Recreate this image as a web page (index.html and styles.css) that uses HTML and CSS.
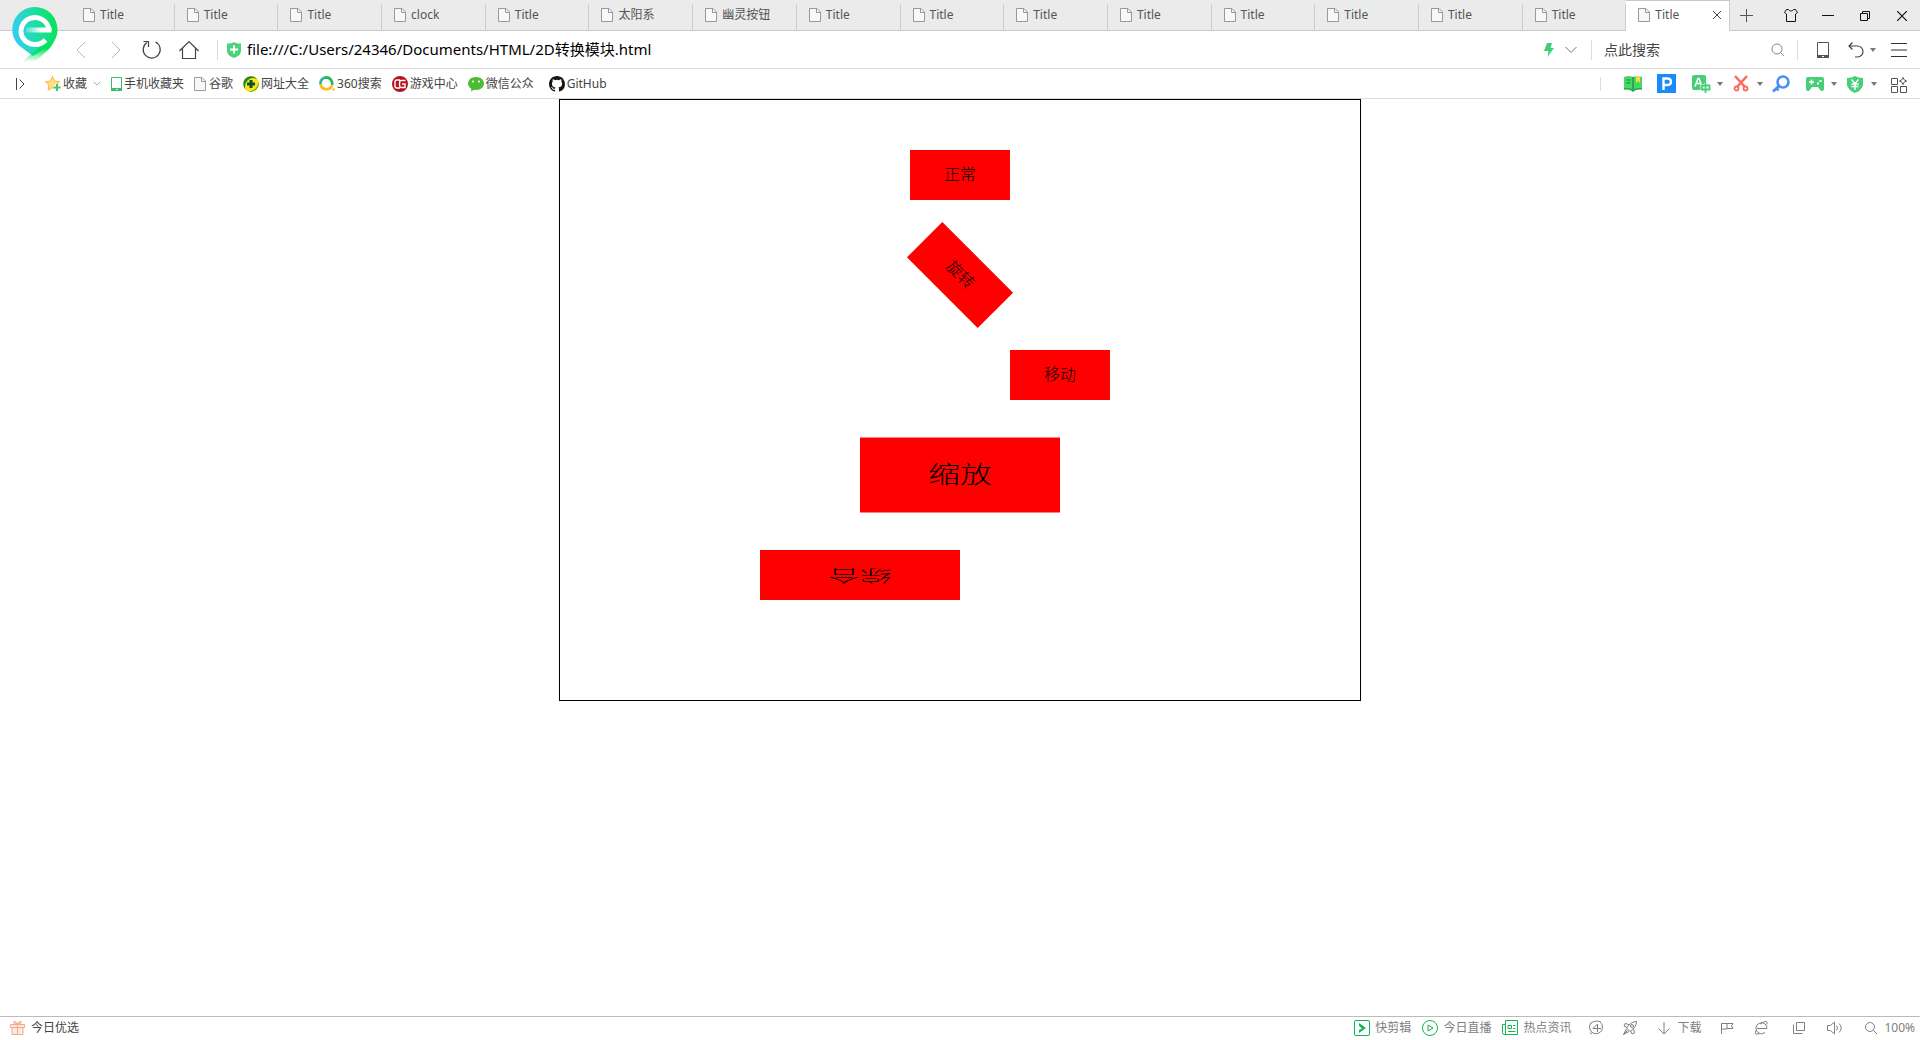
FILE: index.html
```html
<!DOCTYPE html>
<html lang="zh-CN">
<head>
<meta charset="utf-8">
<title>Title</title>
<link rel="stylesheet" href="styles.css">
</head>
<body>
<svg class="defs" aria-hidden="true">
  <symbol id="doc" viewBox="0 0 12 14"><path d="M.5.5H8L11.5 4v9.500H.5z" fill="#f8f8f8" stroke="#999"/><path d="M7.500.5v4h4" fill="none" stroke="#999"/></symbol>
  <symbol id="caret" viewBox="0 0 6 4"><path d="M0 0h6L3 4z" fill="#777"/></symbol>
  <symbol id="chevron" viewBox="0 0 12 8"><path d="M.5 1L6 6.500 11.500 1" fill="none" stroke="#777"/></symbol>
  <symbol id="magnifier" viewBox="0 0 14 14"><circle cx="6" cy="6" r="5" fill="none" stroke="currentColor"/><path d="M9.500 9.500L13 13" stroke="currentColor"/></symbol>
</svg>

<header class="chrome">
  <svg class="logo" viewBox="0 0 48 58" aria-label="360">
    <defs>
      <linearGradient id="lg" x1="0" y1="0.700" x2="1" y2="0.500"><stop offset="0" stop-color="#33cdf5"/><stop offset=".5" stop-color="#20dcb0"/><stop offset="1" stop-color="#08e45c"/></linearGradient>
      <linearGradient id="tail" x1="0" y1="0" x2="0" y2="1"><stop offset="0" stop-color="#06e35c"/><stop offset=".4" stop-color="#06e35c"/><stop offset="1" stop-color="#06e35c" stop-opacity="0"/></linearGradient>
      <linearGradient id="bar" x1="0" y1="0" x2="1" y2="0"><stop offset="0" stop-color="#fff" stop-opacity=".2"/><stop offset=".6" stop-color="#fff"/></linearGradient>
    </defs>
    <path d="M24 1a22.500 22.500 0 0 1 22.500 22.500c0 7-3 12-7 16L22 50 8 39.500A22.500 22.500 0 0 1 24 1z" fill="url(#lg)"/>
    <path d="M13 54L27 42.500 44 33c-2 5-4 8-7 11L24 56H12z" fill="url(#tail)"/>
    <path d="M38 24.500A14 13.500 0 1 0 34.500 34" fill="none" stroke="#fff" stroke-width="5"/>
    <path d="M15 21.500h25.500v5H15z" fill="url(#bar)"/>
  </svg>

  <div class="titlebar">
    <div class="tabs" role="tablist">
      <button class="tab" role="tab"><svg class="doc"><use href="#doc"/></svg>Title</button>
      <button class="tab" role="tab"><svg class="doc"><use href="#doc"/></svg>Title</button>
      <button class="tab" role="tab"><svg class="doc"><use href="#doc"/></svg>Title</button>
      <button class="tab" role="tab"><svg class="doc"><use href="#doc"/></svg>clock</button>
      <button class="tab" role="tab"><svg class="doc"><use href="#doc"/></svg>Title</button>
      <button class="tab" role="tab"><svg class="doc"><use href="#doc"/></svg>太阳系</button>
      <button class="tab" role="tab"><svg class="doc"><use href="#doc"/></svg>幽灵按钮</button>
      <button class="tab" role="tab"><svg class="doc"><use href="#doc"/></svg>Title</button>
      <button class="tab" role="tab"><svg class="doc"><use href="#doc"/></svg>Title</button>
      <button class="tab" role="tab"><svg class="doc"><use href="#doc"/></svg>Title</button>
      <button class="tab" role="tab"><svg class="doc"><use href="#doc"/></svg>Title</button>
      <button class="tab" role="tab"><svg class="doc"><use href="#doc"/></svg>Title</button>
      <button class="tab" role="tab"><svg class="doc"><use href="#doc"/></svg>Title</button>
      <button class="tab" role="tab"><svg class="doc"><use href="#doc"/></svg>Title</button>
      <button class="tab" role="tab"><svg class="doc"><use href="#doc"/></svg>Title</button>
      <button class="tab active" role="tab" aria-selected="true"><svg class="doc"><use href="#doc"/></svg>Title<svg class="tab-close" viewBox="0 0 8 8"><path d="M0 0l8 8M8 0L0 8" stroke="#444"/></svg></button>
    </div>
    <button class="new-tab" aria-label="新标签页"><svg width="13" height="13" viewBox="0 0 13 13"><path d="M6.500 0v13M0 6.500h13" stroke="#555"/></svg></button>
    <div class="window-buttons">
      <button aria-label="皮肤"><svg width="14" height="13" viewBox="0 0 14 13"><path d="M4.500.5C5.500 2.500 8.500 2.500 9.500.5h2l2 3-2 1.500v7.500h-9V5L.5 3.500l2-3z" fill="none" stroke="#111"/></svg></button>
      <button aria-label="最小化"><svg width="12" height="13" viewBox="0 0 12 13"><path d="M0 6.500h12" stroke="#111"/></svg></button>
      <button aria-label="还原"><svg width="10" height="10" viewBox="0 0 10 10"><path d="M.5 2.500h7v7h-7zM2.500 2.500v-2h7v7h-2" fill="none" stroke="#111"/></svg></button>
      <button aria-label="关闭"><svg width="10" height="10" viewBox="0 0 10 10"><path d="M0 0l10 10M10 0L0 10" stroke="#111" stroke-width="1.200"/></svg></button>
    </div>
  </div>

  <div class="address">
    <div class="nav-buttons">
      <button aria-label="后退"><svg width="18" height="18" viewBox="0 0 18 18"><path d="M13 1L5 9l8 8" fill="none" stroke="#b8b8b8"/></svg></button>
      <button aria-label="前进"><svg width="18" height="18" viewBox="0 0 18 18"><path d="M5 1l8 8-8 8" fill="none" stroke="#b8b8b8"/></svg></button>
      <button aria-label="刷新"><svg width="20" height="20" viewBox="0 0 20 20"><path d="M13.500 2A8.500 8.500 0 1 1 5 2.500M1.500 1.500H6.500V7" fill="none" stroke="#444" stroke-width="1.200"/></svg></button>
      <button aria-label="主页"><svg width="20" height="20" viewBox="0 0 20 20"><path d="M.5 11L10 1.500 19.500 11M3.500 8.500v10h13v-10" fill="none" stroke="#444" stroke-width="1.200"/></svg></button>
    </div>
    <span class="rule"></span>
    <svg class="safe" viewBox="0 0 14 16"><path d="M0 1.500Q5 1.500 7 0q2 1.500 7 1.500v8Q13 14 7 16 1 14 0 9.500z" fill="#4bd37b"/><path d="M7 3.500v8M3 7.500h8" stroke="#fff" stroke-width="2"/></svg>
    <input class="url" aria-label="地址" value="file:///C:/Users/24346/Documents/HTML/2D转换模块.html">
    <div class="url-tools">
      <svg width="10" height="14" viewBox="0 0 10 14"><path d="M3 0h5L6.500 5H10L3.500 14 4.500 8H0z" fill="#3fd077"/></svg>
      <svg width="12" height="8"><use href="#chevron"/></svg>
    </div>
    <span class="rule"></span>
    <label class="search"><input aria-label="搜索" value="点此搜索"><svg width="14" height="14"><use href="#magnifier"/></svg></label>
    <span class="rule"></span>
    <div class="menu-buttons">
      <button aria-label="手机"><svg width="12" height="16" viewBox="0 0 12 16"><path d="M.5.5h11v15H.5z" fill="none" stroke="#555"/><path d="M0 13h12v3H0z" fill="#555"/><path d="M5 14.500h2" stroke="#fff"/></svg></button>
      <button class="with-caret" aria-label="恢复"><svg width="16" height="16" viewBox="0 0 16 16"><path d="M4.500.5L1 4l3.500 3.500M1 4h8.500a5.500 5.500 0 0 1 0 11H7" fill="none" stroke="#444" stroke-width="1.200"/></svg><svg width="6" height="4"><use href="#caret"/></svg></button>
      <button aria-label="菜单"><svg width="16" height="14" viewBox="0 0 16 14"><path d="M0 .5h16M0 7h16M0 13.500h16" stroke="#333"/></svg></button>
    </div>
  </div>

  <div class="bookmarks">
    <button class="expand" aria-label="展开"><svg width="9" height="12" viewBox="0 0 9 12"><path d="M.5 0v12M3.500 1.500L8 6l-4.500 4.500" fill="none" stroke="#444"/></svg></button>
    <nav class="links">
      <a href="#"><svg width="16" height="16" viewBox="0 0 16 16"><path d="M7.500.5l2.200 4.600 4.900.6-3.600 3.500.9 5-4.400-2.400-4.400 2.400.9-5L.4 5.700l4.900-.6z" fill="#ffe184" stroke="#f5b93a"/><path d="M12 8v7M8.500 11.500h7" stroke="#fff" stroke-width="4"/><path d="M12 8v7M8.500 11.500h7" stroke="#45c46c" stroke-width="2"/></svg>收藏<svg class="fold" width="8" height="5"><use href="#chevron"/></svg></a>
      <a href="#"><svg width="11" height="14" viewBox="0 0 11 14"><path d="M.5.5h10v13H.5z" fill="#fff" stroke="#3bbd68"/><path d="M0 11h11v3H0z" fill="#3bbd68"/><path d="M5 12.500h1.500" stroke="#fff"/></svg>手机收藏夹</a>
      <a class="page" href="#"><svg class="doc"><use href="#doc"/></svg>谷歌</a>
      <a href="#"><svg width="16" height="16" viewBox="0 0 16 16"><circle cx="8" cy="8" r="8" fill="#ffe11b"/><path d="M2 3a8 8 0 0 1 12 0Q8 0 4 5 1 9 2.500 13.500A8 8 0 0 1 2 3z" fill="#168a2e"/><path d="M15.500 6a8 8 0 0 1-10 9.500Q14 15 15.500 6z" fill="#55ae22"/><path d="M8 4v8M4 8h8" stroke="#07551c" stroke-width="3"/></svg>网址大全</a>
      <a href="#"><svg width="16" height="16" viewBox="0 0 16 16"><path d="M1.500 8a6 6 0 0 1 10.500-4.500" fill="none" stroke="#29b6a0" stroke-width="2.600"/><path d="M6 1.700A6 6 0 0 1 13 9" fill="none" stroke="#27b84b" stroke-width="2.600"/><path d="M1.500 8a6 6 0 0 0 11.500 1.500" fill="none" stroke="#fbba17" stroke-width="2.600"/><circle cx="14.500" cy="13.500" r="1.200" fill="#fbba17"/></svg>360搜索</a>
      <a href="#"><svg width="16" height="16" viewBox="0 0 16 16"><circle cx="8" cy="8" r="8" fill="#b5131d"/><path d="M8 4H5Q3 4 3 6v4q0 2 2 2h3M13.500 4.500H9Q7.500 4.500 7.500 8T9 11.500h4V8h-3" fill="none" stroke="#fff" stroke-width="1.400"/></svg>游戏中心</a>
      <a href="#"><svg width="16" height="16" viewBox="0 0 16 16"><path d="M8 1c4.500 0 8 2.800 8 6.500S12.500 14 8 14l-2-.2L3 15.500l.3-2.700C1.300 11.600 0 9.700 0 7.500 0 3.800 3.500 1 8 1z" fill="#4bbd32"/><circle cx="5" cy="5.500" r="1.100" fill="#fff"/><circle cx="11" cy="5.500" r="1.100" fill="#fff"/></svg>微信公众</a>
      <a class="spaced" href="#"><svg width="16" height="16" viewBox="0 0 16 16"><path fill="#161514" d="M8 0C3.580 0 0 3.580 0 8c0 3.540 2.290 6.530 5.470 7.590.4.070.55-.17.55-.38 0-.19-.01-.82-.01-1.490-2.010.37-2.530-.49-2.690-.94-.09-.23-.48-.94-.82-1.130-.28-.15-.68-.52-.01-.53.63-.01 1.080.58 1.230.82.72 1.210 1.870.87 2.330.66.070-.52.28-.87.51-1.070-1.780-.2-3.640-.89-3.640-3.950 0-.87.31-1.590.82-2.150-.08-.2-.36-1.020.08-2.120 0 0 .67-.21 2.200.82a7.600 7.600 0 0 1 4 0c1.530-1.040 2.200-.82 2.200-.82.44 1.100.16 1.920.08 2.120.51.56.82 1.270.82 2.150 0 3.070-1.870 3.750-3.650 3.950.29.25.54.73.54 1.480 0 1.070-.01 1.930-.01 2.200 0 .21.15.46.55.38A8 8 0 0 0 16 8c0-4.420-3.580-8-8-8z"/></svg>GitHub</a>
    </nav>
    <div class="extensions">
      <span class="rule"></span>
      <button aria-label="阅读"><svg width="20" height="18" viewBox="0 0 20 18"><path d="M1 2q5-2 9 0 4-2 9 0v12q-6-1-9 2-3-3-9-2z" fill="#45d866"/><path d="M10 2v13M3.500 5h4M3.500 8h4" stroke="#118b38" stroke-width="1.200"/><path d="M1 14q6-1 9 2 3-3 9-2" fill="none" stroke="#22a747" stroke-width="1.500"/><path d="M13 1h4v7l-2-2-2 2z" fill="#ffd24a"/></svg></button>
      <button aria-label="P"><svg width="20" height="20" viewBox="0 0 20 20"><path d="M0 0h19v19H0z" fill="#1b8cf7"/><path d="M6.500 16V4.500h3.500q4 0 4 3.200T10 11H6.500" fill="none" stroke="#fff" stroke-width="2.400"/></svg></button>
      <button class="with-caret" aria-label="翻译"><svg width="20" height="20" viewBox="0 0 20 20"><rect x="1" y="1" width="14" height="15" rx="2" fill="#46cf76"/><path d="M4 12.500L7 4.500h1l3 8M5 9.500h5" fill="none" stroke="#fff" stroke-width="1.500"/><path d="M14.500 9v10M11 11.500h7.500v4H11z" fill="none" stroke="#fff" stroke-width="3"/><path d="M14.500 9v10M11 11.500h7.500v4H11z" fill="#fff" stroke="#46cf76" stroke-width="1.800"/></svg><svg width="6" height="4"><use href="#caret"/></svg></button>
      <button class="with-caret" aria-label="截图"><svg width="20" height="20" viewBox="0 0 20 20"><path d="M4 2l10 11M16 2L6 13" stroke="#fb6b60" stroke-width="2.600"/><circle cx="5.500" cy="14.500" r="2" fill="none" stroke="#fb6b60" stroke-width="1.800"/><circle cx="14.500" cy="14.500" r="2" fill="none" stroke="#fb6b60" stroke-width="1.800"/></svg><svg width="6" height="4"><use href="#caret"/></svg></button>
      <button aria-label="密码"><svg width="20" height="20" viewBox="0 0 20 20"><circle cx="12" cy="8" r="5.500" fill="none" stroke="#4c8df8" stroke-width="2.600"/><path d="M8 12l-6 5.500M5.500 14l2 2.500" stroke="#4c8df8" stroke-width="2.800"/></svg></button>
      <button class="with-caret" aria-label="游戏"><svg width="20" height="20" viewBox="0 0 20 20"><path d="M3 3h14q2 0 2 2v10q0 2-2 2h-1l-3-4H7l-3 4H3q-2 0-2-2V5q0-2 2-2z" fill="#46cf76"/><path d="M6.500 5.500v5M4 8h5" stroke="#fff" stroke-width="1.500"/><path d="M12 9.500h2M14.500 7h2" stroke="#fff" stroke-width="2"/></svg><svg width="6" height="4"><use href="#caret"/></svg></button>
      <button class="with-caret" aria-label="购物"><svg width="20" height="20" viewBox="0 0 20 20"><path d="M2 4q5 0 8-2 3 2 8 2v7q-1 5-8 8-7-3-8-8z" fill="#46cf76"/><path d="M6.500 5.500L10 9.500l3.500-4M10 9v7M6.500 10h7M6.500 12.500h7" fill="none" stroke="#fff" stroke-width="1.400"/></svg><svg width="6" height="4"><use href="#caret"/></svg></button>
      <button aria-label="扩展"><svg width="20" height="20" viewBox="0 0 20 20"><path d="M2.500 4.500h6v6h-6zM2.500 12.500h6v6h-6zM11.500 12.500h6v6h-6zM14 3.500l1.200 2.300 2.300 1.200-2.300 1.200L14 10.500l-1.200-2.300L10.500 7l2.300-1.200z" fill="none" stroke="#555"/></svg></button>
    </div>
  </div>
</header>

<main>
  <ul class="stage">
    <li>正常</li>
    <li class="rotated">旋转</li>
    <li class="moved">移动</li>
    <li class="scaled">缩放</li>
    <li class="combined">综合</li>
  </ul>
</main>

<footer class="status">
  <a class="pick" href="#"><svg width="16" height="16" viewBox="0 0 16 16"><path d="M.5 4.500h14v3H.5zM2 7.500h11v7H2zM7.500 4.500v10" fill="#fdeae0" stroke="#f3a988"/><path d="M7.500 4Q3 4 4 1.500 6 1 7.500 4 9 1 11 1.500 12 4 7.500 4z" fill="#fbd0bc" stroke="#f3a988"/></svg>今日优选</a>
  <div class="feeds">
    <a href="#"><svg width="16" height="16" viewBox="0 0 16 16"><rect x=".5" y=".5" width="15" height="15" rx="1.500" fill="none" stroke="#12b552"/><path d="M5 3l7 5-7 5v-3l3-1.500L5 6z" fill="#12b552"/></svg>快剪辑</a>
    <a href="#"><svg width="16" height="16" viewBox="0 0 16 16"><circle cx="8" cy="8" r="7.500" fill="none" stroke="#12b552"/><path d="M6 5l5 3-5 3z" fill="none" stroke="#12b552"/></svg>今日直播</a>
    <a href="#"><svg width="16" height="16" viewBox="0 0 16 16"><path d="M3.500.5h12v14H2.500a2 2 0 0 1-2-2V4.500h3zM3.500 4.500v10M6 5.500h3.500v3H6zM11 5.500h2.500M11 8.500h2.500M6 11.500h7.500" fill="none" stroke="#12b552"/></svg>热点资讯</a>
  </div>
  <div class="tools">
    <button aria-label="加速"><svg width="16" height="16" viewBox="0 0 16 16"><path d="M3 3a6.500 6.500 0 1 0 9.500-.5M2 3.500Q8-.5 13 2M9.500 4L5 8.500h8M9.500 4v8M2 12.500l2 1.500" fill="none" stroke="currentColor"/></svg></button>
    <button aria-label="火箭"><svg width="16" height="16" viewBox="0 0 16 16"><path d="M14.500 1.500Q9 1.500 4.500 8L8 11.500q6.500-4.500 6.500-10zM7 4.500L3 3.500 2 6l3 1.500M11.500 9l1 4-2.500 1-1.500-3M4.500 9l-3 5.500L7 11.500M1.500 14.500l4-4" fill="none" stroke="currentColor"/><circle cx="10" cy="6" r="1.500" fill="none" stroke="currentColor"/></svg></button>
    <button><svg width="16" height="16" viewBox="0 0 16 16"><path d="M8 2v12M2.500 8.500L8 14l5.500-5.500" fill="none" stroke="currentColor"/></svg>下载</button>
    <button aria-label="标记"><svg width="16" height="16" viewBox="0 0 16 16"><path d="M2.500 14V3.500H8v5.500H2.500M8 3.500h6L12.500 6 14 8.500H8" fill="none" stroke="currentColor"/></svg></button>
    <button aria-label="内核"><svg width="16" height="16" viewBox="0 0 16 16"><path d="M4 8.500h10A5.500 5.500 0 1 0 12 12.500M3.500 9.500Q0 16 6.500 13.500M7 4q8-5.500 7 .5" fill="none" stroke="currentColor"/></svg></button>
  </div>
  <div class="view">
    <button aria-label="窗口"><svg width="16" height="16" viewBox="0 0 16 16"><path d="M5.500 2.500h8v8h-8zM2.500 4.500v9h9" fill="none" stroke="currentColor"/></svg></button>
    <button aria-label="声音"><svg width="16" height="16" viewBox="0 0 16 16"><path d="M.5 5.500h3l4-3.500v12l-4-3.500h-3zM9.500 5.500q2 2.500 0 5M12 3.500q4.500 4.500 0 9" fill="none" stroke="currentColor"/></svg></button>
    <button><svg width="16" height="16" viewBox="0 0 16 16"><circle cx="7" cy="7" r="4.500" fill="none" stroke="currentColor"/><path d="M10.500 10.500L14 14" stroke="currentColor"/></svg>100%</button>
  </div>
</footer>
</body>
</html>
```

FILE: styles.css
```css
* { box-sizing: border-box; }

body {
  display: flex;
  flex-direction: column;
  min-height: 100vh;
  margin: 0;
  background: #fff;
  color: #444;
  font: 12px/16px "Noto Sans", "Noto Sans CJK SC", sans-serif;
}

svg { flex: none; display: block; }

.defs { position: absolute; width: 0; height: 0; }

button {
  display: flex;
  align-items: center;
  justify-content: center;
  margin: 0;
  padding: 0;
  border: 0;
  background: none;
  color: inherit;
  font: inherit;
}

input {
  min-width: 0;
  padding: 0;
  border: 0;
  outline: 0;
  background: none;
  font-family: inherit;
}

a { display: flex; align-items: center; color: inherit; text-decoration: none; }

.chrome { position: relative; }

.logo { position: absolute; left: 11px; top: 6px; width: 48px; height: 58px; }

.doc { width: 12px; height: 14px; }

.rule { flex: none; width: 1px; height: 20px; background: #dcdcdc; }

/* Tab strip */
.titlebar {
  display: flex;
  height: 31px;
  padding-left: 71px;
  background: #ebebeb;
  box-shadow: inset 0 -1px #c8c8c8;
}

.tabs { display: flex; flex: 1; align-items: flex-end; min-width: 0; }

.tab {
  flex: 1 1 0;
  justify-content: flex-start;
  gap: 5px;
  min-width: 0;
  height: 27px;
  padding: 0 8px 5px 12px;
  border-right: 1px solid #cdcdcd;
  color: #555;
  white-space: nowrap;
}

.tab.active {
  height: 31px;
  padding-top: 3px;
  border-top: 1px solid #c8c8c8;
  background: #fff;
}

.tab-close { width: 8px; height: 8px; margin-left: auto; }

.new-tab { width: 33px; margin-right: 10px; }

.window-buttons { display: flex; gap: 1px; }
.window-buttons button { width: 36px; }

/* Address bar */
.address {
  display: flex;
  align-items: center;
  height: 38px;
  padding: 0 13px 0 72px;
  border-bottom: 1px solid #dcdcdc;
}

.nav-buttons { display: flex; gap: 17px; margin-right: 18px; }

.safe { width: 14px; height: 16px; margin: 0 6px 0 9px; }

.url { flex: 1; height: 24px; padding-bottom: 2px; color: #000; font-size: 15px; line-height: 22px; }

.url-tools { display: flex; align-items: center; gap: 11px; margin-right: 14px; }

.search { display: flex; align-items: center; width: 205px; padding: 0 12px; color: #888; }
.search input { flex: 1; height: 24px; color: #444; font-size: 14px; line-height: 24px; }

.menu-buttons { display: flex; align-items: center; gap: 19px; margin-left: 19px; }
.menu-buttons button:last-child { margin-left: -4px; }

.with-caret { gap: 6px; }

/* Bookmarks */
.bookmarks {
  display: flex;
  align-items: center;
  height: 30px;
  padding: 0 11px 0 16px;
  border-bottom: 1px solid #dcdcdc;
}

.expand { margin-right: 20px; }

.links { display: flex; gap: 10px; white-space: nowrap; }
.links a { gap: 2px; }
.links .page { gap: 3px; }
.links .fold { margin-left: 4px; }
.links .spaced { margin-left: 5px; }

.extensions { display: flex; align-items: center; gap: 14px; margin-left: auto; }
.extensions .rule { height: 14px; margin-right: 8px; }
.extensions .with-caret { margin-right: -6px; }
.extensions button:last-child { margin-left: 4px; }

/* Page content */
main { flex: 1; padding-bottom: 24px; }

.stage {
  width: 802px;
  margin: 0 auto;
  padding-bottom: 50px;
  border: 1px solid #000;
  padding-left: 0;
  list-style: none;
}

.stage li {
  width: 100px;
  height: 50px;
  margin: 50px auto;
  background: #f00;
  color: #000;
  font-size: 16px;
  font-weight: 300;
  line-height: 48px;
  text-align: center;
}

.stage .rotated { transform: rotate(45deg); }
.stage .moved { transform: translateX(100px); }
.stage .scaled { transform: scale(2, 1.5); }
.stage .combined { transform: translateX(-100px) rotate(180deg) scale(2, 1); }

/* Status bar */
.status {
  display: flex;
  align-items: center;
  height: 24px;
  padding: 0 5px 2px 10px;
  border-top: 1px solid #bbb;
  color: #808080;
}

.status a, .status button { gap: 5px; white-space: nowrap; }
.status .pick { margin-right: auto; color: #444; }

.feeds { display: flex; gap: 11px; margin-right: 17px; }
.tools { display: flex; gap: 18px; margin-right: 22px; }
.view { display: flex; gap: 20px; }
```
